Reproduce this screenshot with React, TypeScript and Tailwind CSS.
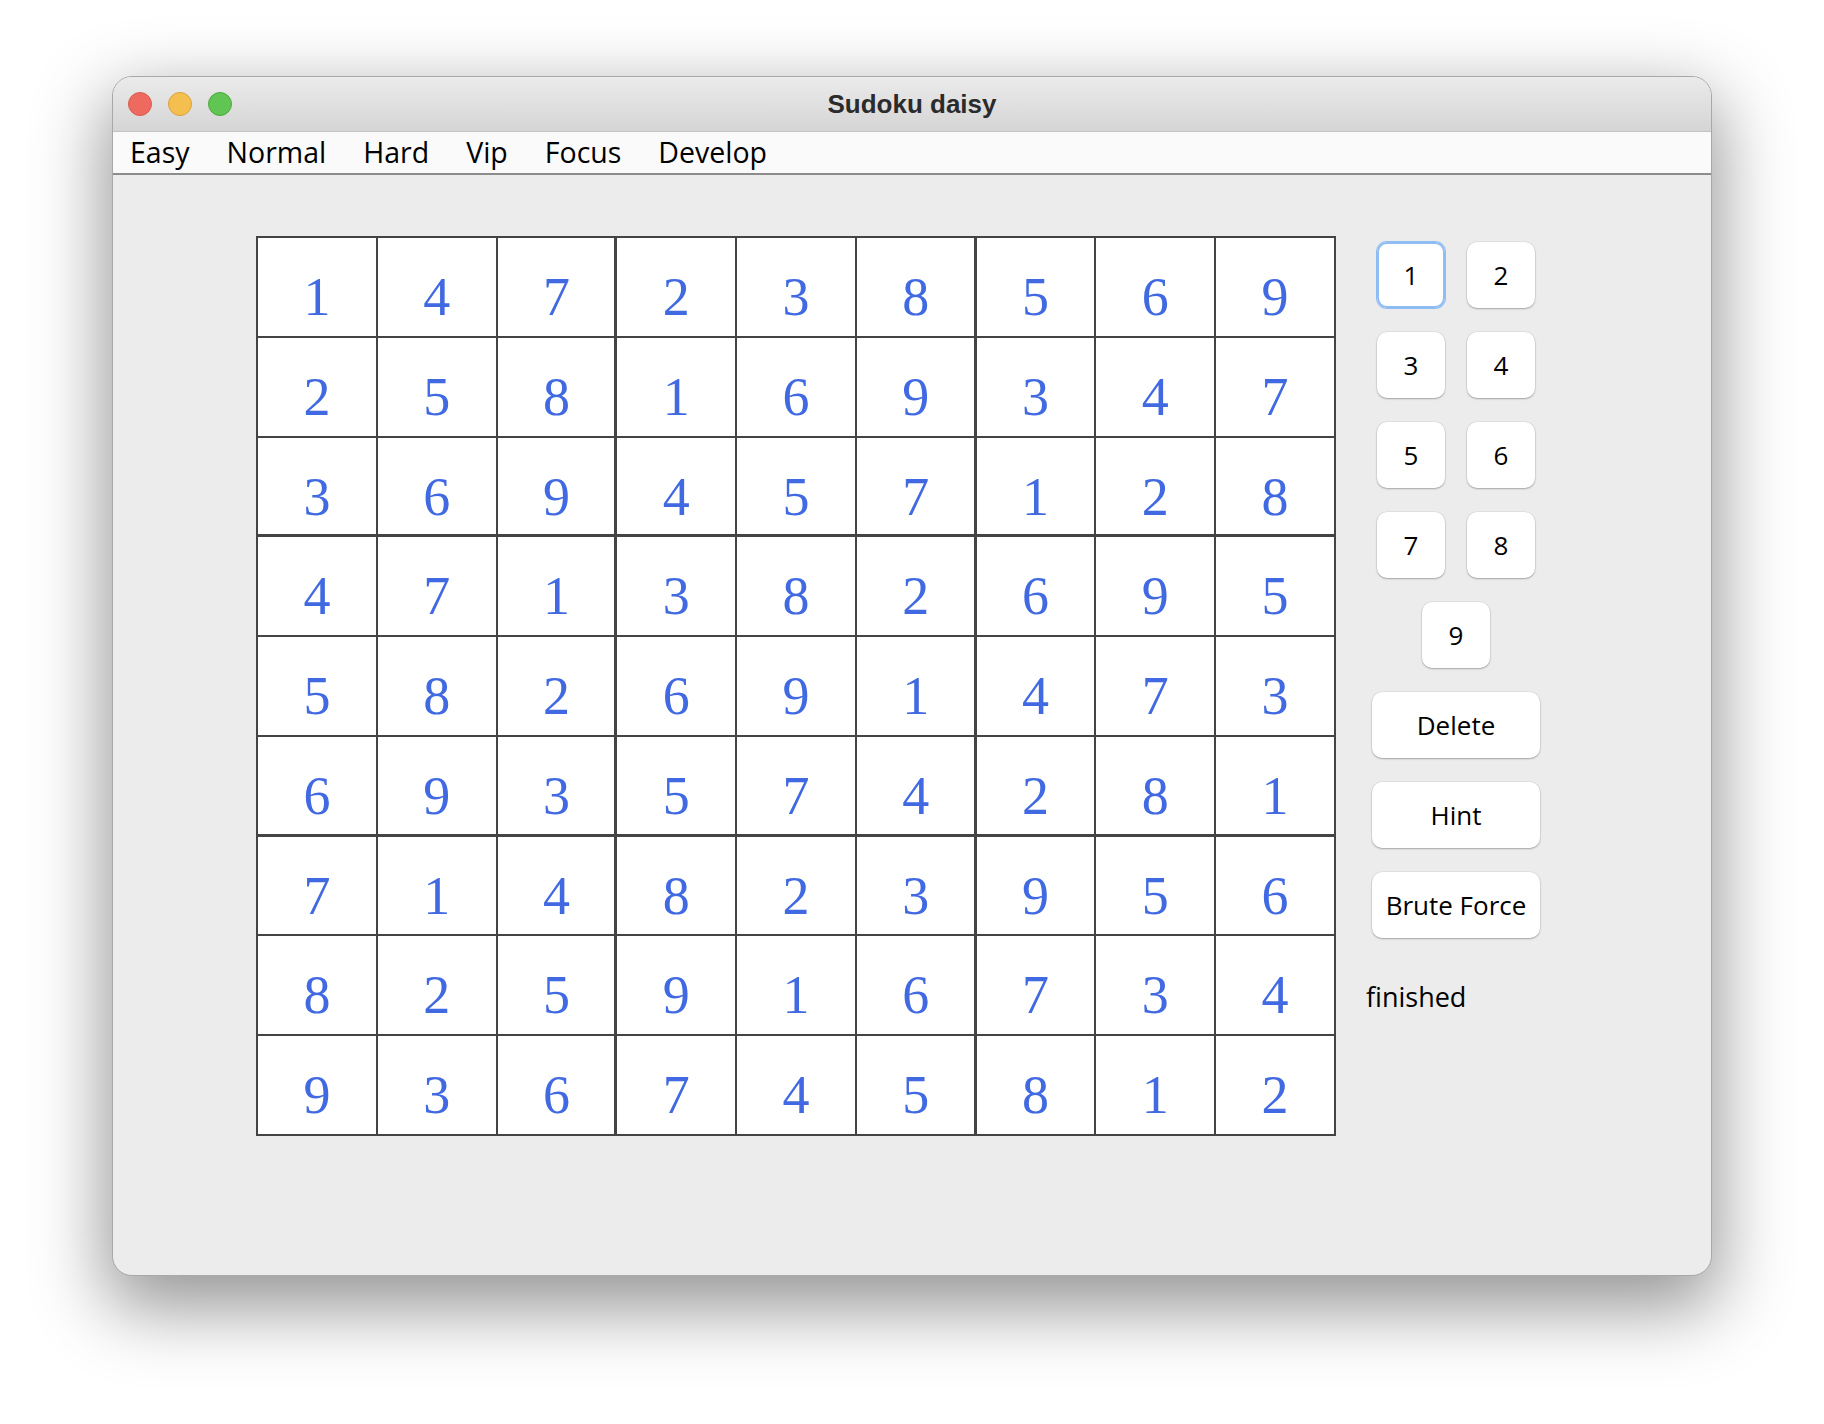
import React from "react";

const board: number[][] = [
  [1, 4, 7, 2, 3, 8, 5, 6, 9],
  [2, 5, 8, 1, 6, 9, 3, 4, 7],
  [3, 6, 9, 4, 5, 7, 1, 2, 8],
  [4, 7, 1, 3, 8, 2, 6, 9, 5],
  [5, 8, 2, 6, 9, 1, 4, 7, 3],
  [6, 9, 3, 5, 7, 4, 2, 8, 1],
  [7, 1, 4, 8, 2, 3, 9, 5, 6],
  [8, 2, 5, 9, 1, 6, 7, 3, 4],
  [9, 3, 6, 7, 4, 5, 8, 1, 2],
];

const menus = ["Easy", "Normal", "Hard", "Vip", "Focus", "Develop"];

const uiFont = { fontFamily: '"Open Sans", "DejaVu Sans", sans-serif' };

// thicker lines between the 3x3 boxes
function boxEdge(row: number, col: number) {
  const right = col === 2 || col === 5;
  const bottom = row === 2 || row === 5;
  if (right && bottom) return "shadow-[inset_-1px_-1px_0_#444444]";
  if (right) return "shadow-[inset_-1px_0_0_#444444]";
  if (bottom) return "shadow-[inset_0_-1px_0_#444444]";
  return "";
}

function KeyButton({ label, focused, wide }: { label: string; focused?: boolean; wide?: boolean }) {
  return (
    <button
      type="button"
      style={uiFont}
      className={
        (wide ? "w-[168px] " : "w-[68px] ") +
        (focused
          ? "shadow-[0_0_0_1px_#8fbcf2,inset_0_0_0_2px_#8fbcf2] "
          : "shadow-[0_1px_2px_rgba(0,0,0,0.28),0_0_0_0.5px_rgba(0,0,0,0.08)] ") +
        "flex h-[66px] items-center justify-center rounded-[10px] bg-white text-[26px] text-black"
      }
    >
      {label}
    </button>
  );
}

export default function App() {
  return (
    <div className="h-[1424px] w-[1824px] bg-white pl-[112px] pt-[76px]">
      <div className="flex h-[1200px] w-[1600px] flex-col overflow-hidden rounded-[20px] border border-[#a8a8a8] bg-[#ececec] shadow-[0_26px_72px_6px_rgba(0,0,0,0.42)]">
        {/* title bar */}
        <div className="grid h-[55px] grid-cols-[1fr_auto_1fr] items-center border-b border-[#c3c3c3] bg-gradient-to-b from-[#ebebeb] to-[#d5d5d5]">
          <div className="flex items-center gap-[16px] pl-[15px]">
            <span className="h-[24px] w-[24px] rounded-full border border-[#d95a4e] bg-[#ee6a5f]" />
            <span className="h-[24px] w-[24px] rounded-full border border-[#d9a23d] bg-[#f5bf4f]" />
            <span className="h-[24px] w-[24px] rounded-full border border-[#4ea83f] bg-[#61c554]" />
          </div>
          <div
            className="text-[26px] font-bold leading-[52px] text-[#2b2b2b]"
            style={{ fontFamily: '"Liberation Sans", Arial, sans-serif' }}
          >
            Sudoku daisy
          </div>
          <div />
        </div>

        {/* menu bar */}
        <div className="flex h-[43px] gap-[37px] border-b-2 border-[#8c8c8c] bg-[#fafafa] pl-[17px]" style={uiFont}>
          {menus.map((m) => (
            <span key={m} className="text-[28.5px] leading-[41px] text-black">
              {m}
            </span>
          ))}
        </div>

        {/* content */}
        <div className="flex flex-1 items-start pl-[143px] pt-[61px]">
          <div className="grid h-[900px] w-[1080px] grid-cols-9 gap-[2px] bg-[#444444] p-[2px]">
            {board.map((row, r) =>
              row.map((n, c) => (
                <div
                  key={r * 9 + c}
                  className={
                    "flex justify-center bg-white pt-[32px] text-[54px] leading-none text-[#4169e1] " + boxEdge(r, c)
                  }
                  style={{ fontFamily: '"Liberation Serif", "Times New Roman", serif' }}
                >
                  {n}
                </div>
              ))
            )}
          </div>

          <div className="ml-[30px] mt-[6px] flex w-[180px] flex-col items-center gap-[24px]">
            <div className="flex gap-[22px]">
              <KeyButton label="1" focused />
              <KeyButton label="2" />
            </div>
            <div className="flex gap-[22px]">
              <KeyButton label="3" />
              <KeyButton label="4" />
            </div>
            <div className="flex gap-[22px]">
              <KeyButton label="5" />
              <KeyButton label="6" />
            </div>
            <div className="flex gap-[22px]">
              <KeyButton label="7" />
              <KeyButton label="8" />
            </div>
            <KeyButton label="9" />
            <KeyButton label="Delete" wide />
            <KeyButton label="Hint" wide />
            <KeyButton label="Brute Force" wide />
            <div className="mt-[17px] self-start text-[27px] leading-[36px] text-black" style={uiFont}>
              finished
            </div>
          </div>
        </div>
      </div>
    </div>
  );
}
